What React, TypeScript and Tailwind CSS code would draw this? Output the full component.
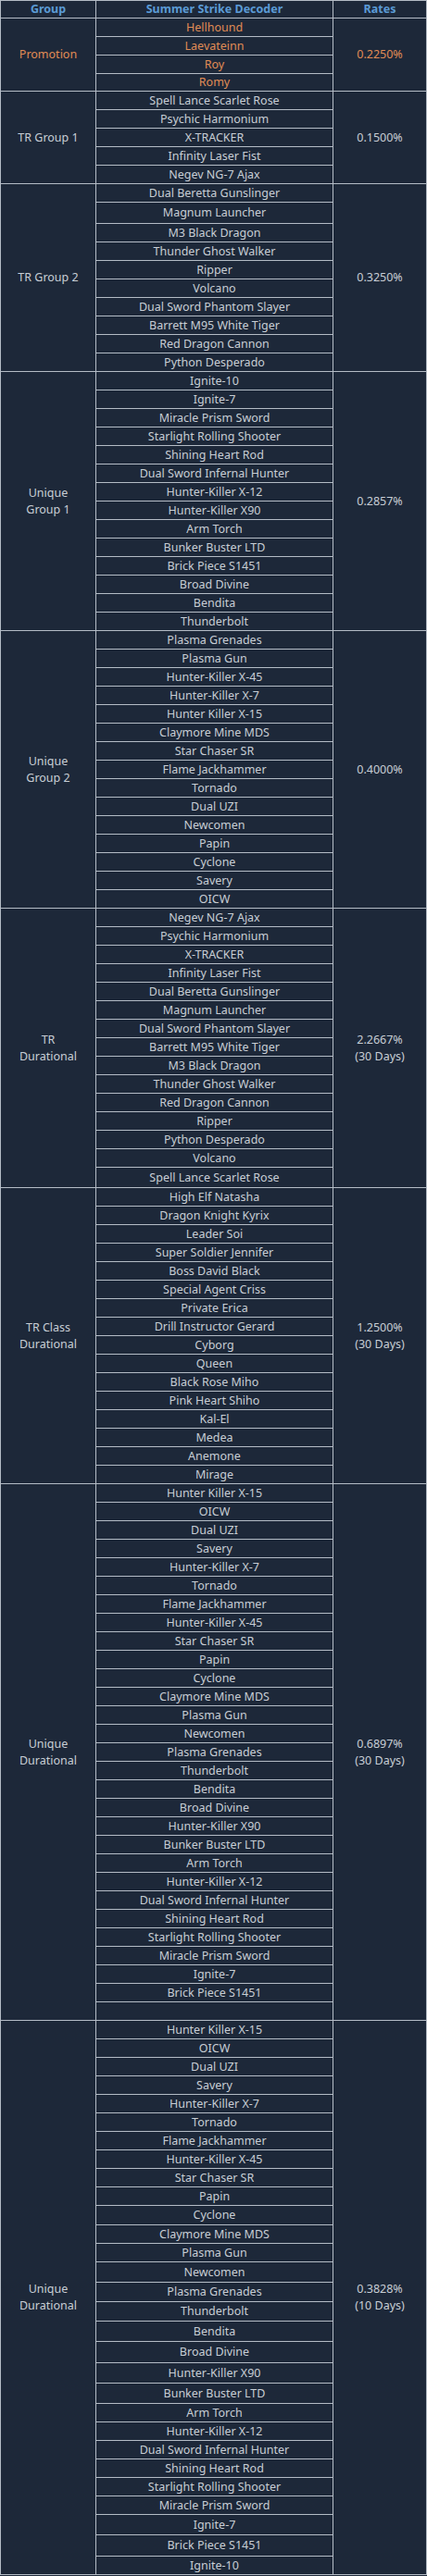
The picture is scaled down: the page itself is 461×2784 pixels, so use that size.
import React from "react";

type Item = { name: string; h?: string };
type Section = {
  label: string[];
  rate: string[];
  span: string;
  orange?: boolean;
  items: Item[];
};

const i = (name: string, h?: string): Item => ({ name, h });

const sections: Section[] = [
  {
    label: ["Promotion"],
    rate: ["0.2250%"],
    span: "row-span-4",
    orange: true,
    items: [i("Hellhound"), i("Laevateinn"), i("Roy"), i("Romy", "h-[18px]")],
  },
  {
    label: ["TR Group 1"],
    rate: ["0.1500%"],
    span: "row-span-5",
    items: [
      i("Spell Lance Scarlet Rose"),
      i("Psychic Harmonium"),
      i("X-TRACKER"),
      i("Infinity Laser Fist"),
      i("Negev NG-7 Ajax"),
    ],
  },
  {
    label: ["TR Group 2"],
    rate: ["0.3250%"],
    span: "row-span-10",
    items: [
      i("Dual Beretta Gunslinger"),
      i("Magnum Launcher", "h-[22px]"),
      i("M3 Black Dragon"),
      i("Thunder Ghost Walker"),
      i("Ripper"),
      i("Volcano"),
      i("Dual Sword Phantom Slayer"),
      i("Barrett M95 White Tiger"),
      i("Red Dragon Cannon"),
      i("Python Desperado"),
    ],
  },
  {
    label: ["Unique", "Group 1"],
    rate: ["0.2857%"],
    span: "row-span-14",
    items: [
      i("Ignite-10"),
      i("Ignite-7"),
      i("Miracle Prism Sword"),
      i("Starlight Rolling Shooter"),
      i("Shining Heart Rod"),
      i("Dual Sword Infernal Hunter"),
      i("Hunter-Killer X-12"),
      i("Hunter-Killer X90"),
      i("Arm Torch"),
      i("Bunker Buster LTD"),
      i("Brick Piece S1451"),
      i("Broad Divine"),
      i("Bendita"),
      i("Thunderbolt"),
    ],
  },
  {
    label: ["Unique", "Group 2"],
    rate: ["0.4000%"],
    span: "row-span-15",
    items: [
      i("Plasma Grenades"),
      i("Plasma Gun"),
      i("Hunter-Killer X-45"),
      i("Hunter-Killer X-7"),
      i("Hunter Killer X-15"),
      i("Claymore Mine MDS"),
      i("Star Chaser SR"),
      i("Flame Jackhammer"),
      i("Tornado"),
      i("Dual UZI"),
      i("Newcomen"),
      i("Papin"),
      i("Cyclone"),
      i("Savery"),
      i("OICW"),
    ],
  },
  {
    label: ["TR", "Durational"],
    rate: ["2.2667%", "(30 Days)"],
    span: "row-span-15",
    items: [
      i("Negev NG-7 Ajax"),
      i("Psychic Harmonium"),
      i("X-TRACKER"),
      i("Infinity Laser Fist"),
      i("Dual Beretta Gunslinger"),
      i("Magnum Launcher"),
      i("Dual Sword Phantom Slayer"),
      i("Barrett M95 White Tiger"),
      i("M3 Black Dragon"),
      i("Thunder Ghost Walker"),
      i("Red Dragon Cannon"),
      i("Ripper"),
      i("Python Desperado"),
      i("Volcano"),
      i("Spell Lance Scarlet Rose", "h-[21px]"),
    ],
  },
  {
    label: ["TR Class", "Durational"],
    rate: ["1.2500%", "(30 Days)"],
    span: "row-span-16",
    items: [
      i("High Elf Natasha"),
      i("Dragon Knight Kyrix"),
      i("Leader Soi"),
      i("Super Soldier Jennifer"),
      i("Boss David Black"),
      i("Special Agent Criss"),
      i("Private Erica"),
      i("Drill Instructor Gerard"),
      i("Cyborg"),
      i("Queen"),
      i("Black Rose Miho"),
      i("Pink Heart Shiho"),
      i("Kal-El"),
      i("Medea"),
      i("Anemone"),
      i("Mirage"),
    ],
  },
  {
    label: ["Unique", "Durational"],
    rate: ["0.6897%", "(30 Days)"],
    span: "row-span-29",
    items: [
      i("Hunter Killer X-15"),
      i("OICW"),
      i("Dual UZI"),
      i("Savery"),
      i("Hunter-Killer X-7"),
      i("Tornado"),
      i("Flame Jackhammer"),
      i("Hunter-Killer X-45"),
      i("Star Chaser SR"),
      i("Papin"),
      i("Cyclone"),
      i("Claymore Mine MDS"),
      i("Plasma Gun"),
      i("Newcomen"),
      i("Plasma Grenades"),
      i("Thunderbolt"),
      i("Bendita"),
      i("Broad Divine"),
      i("Hunter-Killer X90"),
      i("Bunker Buster LTD"),
      i("Arm Torch"),
      i("Hunter-Killer X-12"),
      i("Dual Sword Infernal Hunter"),
      i("Shining Heart Rod"),
      i("Starlight Rolling Shooter"),
      i("Miracle Prism Sword"),
      i("Ignite-7"),
      i("Brick Piece S1451"),
      i(""),
    ],
  },
  {
    label: ["Unique", "Durational"],
    rate: ["0.3828%", "(10 Days)"],
    span: "row-span-29",
    items: [
      i("Hunter Killer X-15"),
      i("OICW"),
      i("Dual UZI"),
      i("Savery"),
      i("Hunter-Killer X-7"),
      i("Tornado"),
      i("Flame Jackhammer"),
      i("Hunter-Killer X-45"),
      i("Star Chaser SR"),
      i("Papin"),
      i("Cyclone", "h-[20px]"),
      i("Claymore Mine MDS"),
      i("Plasma Gun"),
      i("Newcomen", "h-[21px]"),
      i("Plasma Grenades", "h-[20px]"),
      i("Thunderbolt", "h-[20px]"),
      i("Bendita", "h-[21px]"),
      i("Broad Divine", "h-[22px]"),
      i("Hunter-Killer X90", "h-[21px]"),
      i("Bunker Buster LTD", "h-[21px]"),
      i("Arm Torch"),
      i("Hunter-Killer X-12"),
      i("Dual Sword Infernal Hunter"),
      i("Shining Heart Rod"),
      i("Starlight Rolling Shooter"),
      i("Miracle Prism Sword"),
      i("Ignite-7", "h-[21px]"),
      i("Brick Piece S1451", "h-[22px]"),
      i("Ignite-10"),
    ],
  },
];

const cell =
  "bg-[#1d2839] flex flex-col items-center justify-center text-center";

export default function App() {
  return (
    <div
      className="min-h-screen w-[461px] bg-[#1d2839] text-[12.5px] leading-[18px] text-[#c8ced5]"
      style={{ fontFamily: '"Noto Sans", "Open Sans", Arial, sans-serif' }}
    >
      <div className="grid w-[461px] grid-cols-[102px_255px_100px] gap-px bg-[#b4bcc6] p-px">
        <div className={`${cell} col-start-1 h-[18px] font-bold text-[#5b9bd5]`}>
          Group
        </div>
        <div className={`${cell} col-start-2 h-[18px] font-bold text-[#5b9bd5]`}>
          Summer Strike Decoder
        </div>
        <div className={`${cell} col-start-3 h-[18px] font-bold text-[#5b9bd5]`}>
          Rates
        </div>
        {sections.map((s, si) => {
          const color = s.orange ? "text-[#e08c55]" : "";
          const [first, ...rest] = s.items;
          return (
            <React.Fragment key={si}>
              <div className={`${cell} col-start-1 ${s.span} ${color}`}>
                {s.label.map((l, k) => (
                  <span key={k}>{l}</span>
                ))}
              </div>
              <div className={`${cell} col-start-2 ${first.h ?? "h-[19px]"} ${color}`}>
                {first.name}
              </div>
              <div className={`${cell} col-start-3 ${s.span} ${color}`}>
                {s.rate.map((l, k) => (
                  <span key={k}>{l}</span>
                ))}
              </div>
              {rest.map((it, k) => (
                <div
                  key={k}
                  className={`${cell} col-start-2 ${it.h ?? "h-[19px]"} ${color}`}
                >
                  {it.name}
                </div>
              ))}
            </React.Fragment>
          );
        })}
      </div>
    </div>
  );
}
